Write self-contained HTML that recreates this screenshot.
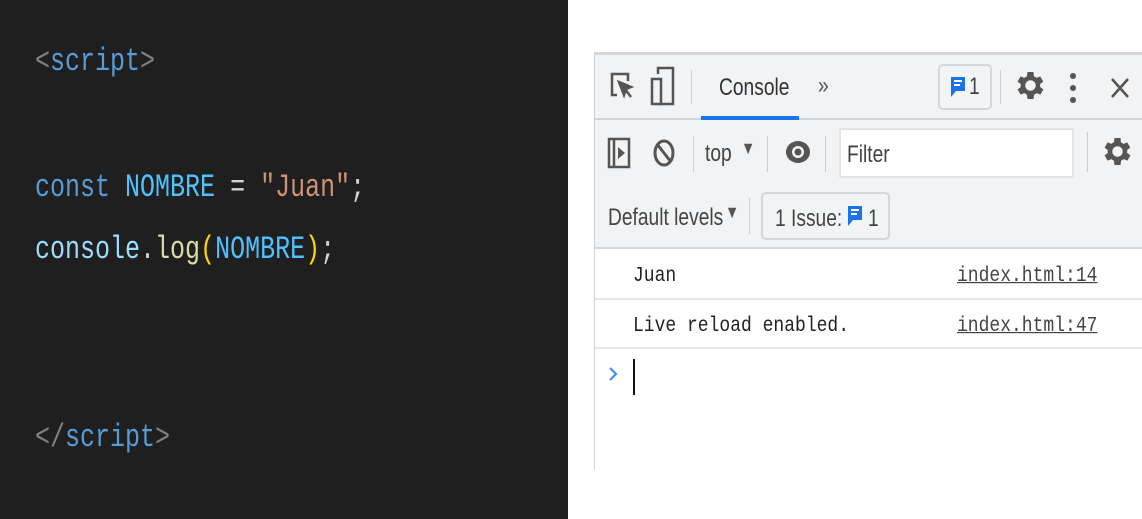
<!DOCTYPE html>
<html><head><meta charset="utf-8"><style>
*{margin:0;padding:0;box-sizing:border-box}
body{width:1142px;height:519px;position:relative;background:#fff;overflow:hidden;font-family:"Liberation Sans",sans-serif}
.ed{position:absolute;left:0;top:0;width:568px;height:519px;background:#1f1f1f}
.cl{position:absolute;left:35px;font-family:"Liberation Mono",monospace;font-size:25px;white-space:pre;transform:scaleY(1.3);transform-origin:left center;line-height:32px;height:32px}
.g{color:#808080}.b{color:#569cd6}.c{color:#4fc1ff}.s{color:#ce9178}.w{color:#d4d4d4}.y{color:#dcdcaa}.p{color:#ffd700}.k{color:#9cdcfe}
.dt{position:absolute;left:594px;top:52px;width:548px;height:418px;border-left:1px solid #cfd1d4}
.bar{position:absolute;left:0;width:548px;background:#f1f3f4}
.sep{position:absolute;width:1px;background:#cdcfd2}
.t{position:absolute;color:#333;font-size:24px;transform:scaleX(0.8);transform-origin:left center;white-space:nowrap}
.mono{position:absolute;font-family:"Liberation Mono",monospace;font-size:18px;color:#222;white-space:pre;transform:scaleY(1.2);transform-origin:left center}
.lnk{text-decoration:underline;color:#444}
.hl{position:absolute;left:0;width:548px;height:2px;background:#e6e7e9}
</style></head><body>
<div class="ed">
<div class="cl" style="top:46px"><span class="g">&lt;</span><span class="b">script</span><span class="g">&gt;</span></div>
<div class="cl" style="top:172px"><span class="b">const</span> <span class="c">NOMBRE</span> <span class="w">=</span> <span class="s">"Juan"</span><span class="w">;</span></div>
<div class="cl" style="top:234px"><span class="k">console</span><span class="w">.</span><span class="y">log</span><span class="p">(</span><span class="c">NOMBRE</span><span class="p">)</span><span class="w">;</span></div>
<div class="cl" style="top:422px"><span class="g">&lt;/</span><span class="b">script</span><span class="g">&gt;</span></div>
</div>
<div class="dt">
<div style="position:absolute;left:0;top:0;width:548px;height:3px;background:#d5d7da"></div>
<div class="bar" style="top:3px;height:63px"></div>
<div style="position:absolute;left:0;top:66px;width:548px;height:2px;background:#d2d4d7"></div>
<div class="bar" style="top:68px;height:128px"></div>
<div style="position:absolute;left:0;top:195px;width:548px;height:2px;background:#d6d8db"></div>
<svg style="position:absolute;left:14px;top:19px" width="26" height="34" viewBox="0 0 26 34" fill="none" stroke="#555" stroke-width="2.5"><path d="M8 24H3V3h16v7"/><path d="M10 11l12 5-5 2-2 6z" fill="#555"/><path d="M16 18l6 8"/></svg>
<svg style="position:absolute;left:55px;top:14px" width="26" height="40" viewBox="0 0 26 40" fill="none" stroke="#555" stroke-width="2.5"><path d="M8 8V2h15v36H9"/><rect x="2" y="13" width="9" height="25"/></svg>
<div class="sep" style="left:96px;top:18px;height:34px"></div>
<div class="t" style="left:124px;top:22px">Console</div>
<div style="position:absolute;left:106px;top:64px;width:98px;height:4px;background:#1a73e8"></div>
<div class="t" style="left:223px;top:20px;color:#555">»</div>
<div style="position:absolute;left:343px;top:12px;width:54px;height:46px;border:2px solid #d5d7da;border-radius:5px;background:#f3f4f5"></div>
<svg style="position:absolute;left:355px;top:24px" width="16" height="22" viewBox="0 0 16 22"><path d="M1 1h14v14H6l-5 6z" fill="#1a73e8"/><path d="M4 5h8M4 9h6" stroke="#fff" stroke-width="2"/></svg>
<div class="t" style="left:374px;top:21px;color:#444">1</div>
<div class="sep" style="left:405px;top:18px;height:34px"></div>
<svg style="position:absolute;left:422px;top:19px" width="30" height="32" viewBox="3 3 20 20"><path fill="#555" d="M19.4 13a7.8 7.8 0 000-2l2.1-1.6-2-3.5-2.5 1a7.6 7.6 0 00-1.7-1L15 3h-4l-.4 2.9a7.6 7.6 0 00-1.7 1l-2.5-1-2 3.5L6.5 11a7.8 7.8 0 000 2l-2.1 1.6 2 3.5 2.5-1a7.6 7.6 0 001.7 1L11 21h4l.4-2.9a7.6 7.6 0 001.7-1l2.5 1 2-3.5zM13 15.5a3.5 3.5 0 110-7 3.5 3.5 0 010 7z" transform="translate(-1 0)"/></svg>
<svg style="position:absolute;left:474px;top:20px" width="8" height="32"><circle cx="4" cy="4" r="3" fill="#555"/><circle cx="4" cy="16" r="3" fill="#555"/><circle cx="4" cy="28" r="3" fill="#555"/></svg>
<svg style="position:absolute;left:515px;top:25px" width="20" height="22" viewBox="0 0 20 22" stroke="#555" stroke-width="2.6"><path d="M2 2l16 18M18 2L2 20"/></svg>
<svg style="position:absolute;left:12px;top:85px" width="24" height="32" viewBox="0 0 24 32" fill="none" stroke="#555" stroke-width="2.5"><rect x="2" y="2" width="20" height="28"/><path d="M7 2v28"/><path d="M11 10l7 6-7 6z" fill="#555" stroke="none"/></svg>
<svg style="position:absolute;left:57px;top:86px" width="24" height="30" viewBox="0 0 24 30" fill="none" stroke="#555" stroke-width="3"><ellipse cx="12" cy="15" rx="9" ry="12"/><path d="M5 6l14 18"/></svg>
<div class="sep" style="left:98px;top:84px;height:36px"></div>
<div class="t" style="left:110px;top:88px;color:#444">top</div>
<div class="t" style="left:146px;top:86px;color:#555;font-size:18px">▼</div>
<div class="sep" style="left:172px;top:84px;height:36px"></div>
<svg style="position:absolute;left:190px;top:88px" width="26" height="24" viewBox="0 0 26 24"><ellipse cx="13" cy="12" rx="12" ry="11" fill="#555"/><circle cx="13" cy="12" r="6" fill="#f1f3f4"/><circle cx="13" cy="12" r="3.5" fill="#555"/></svg>
<div class="sep" style="left:230px;top:84px;height:36px"></div>
<div style="position:absolute;left:244px;top:76px;width:235px;height:50px;background:#fff;border:2px solid #e3e4e6;border-radius:2px"></div>
<div class="t" style="left:252px;top:89px;color:#444">Filter</div>
<div class="sep" style="left:492px;top:80px;height:40px"></div>
<svg style="position:absolute;left:509px;top:84px" width="30" height="34" viewBox="3 3 20 20"><path fill="#555" d="M19.4 13a7.8 7.8 0 000-2l2.1-1.6-2-3.5-2.5 1a7.6 7.6 0 00-1.7-1L15 3h-4l-.4 2.9a7.6 7.6 0 00-1.7 1l-2.5-1-2 3.5L6.5 11a7.8 7.8 0 000 2l-2.1 1.6 2 3.5 2.5-1a7.6 7.6 0 001.7 1L11 21h4l.4-2.9a7.6 7.6 0 001.7-1l2.5 1 2-3.5zM13 15.5a3.5 3.5 0 110-7 3.5 3.5 0 010 7z" transform="translate(-1 0)"/></svg>
<div class="t" style="left:13px;top:152px;color:#444">Default levels</div>
<div class="t" style="left:130px;top:150px;color:#555;font-size:18px">▼</div>
<div class="sep" style="left:154px;top:146px;height:36px"></div>
<div style="position:absolute;left:166px;top:140px;width:129px;height:48px;border:2px solid #d5d7da;border-radius:5px;background:#f3f4f5"></div>
<div class="t" style="left:180px;top:153px;color:#444">1 Issue:</div>
<svg style="position:absolute;left:252px;top:153px" width="16" height="22" viewBox="0 0 16 22"><path d="M1 1h14v14H6l-5 6z" fill="#1a73e8"/><path d="M4 5h8M4 9h6" stroke="#fff" stroke-width="2"/></svg>
<div class="t" style="left:273px;top:153px;color:#444">1</div>
<div class="mono" style="left:38px;top:214px">Juan</div>
<div class="mono lnk" style="left:362px;top:214px">index.html:14</div>
<div class="hl" style="top:246px"></div>
<div class="mono" style="left:38px;top:264px">Live reload enabled.</div>
<div class="mono lnk" style="left:362px;top:264px">index.html:47</div>
<div class="hl" style="top:295px"></div>
<svg style="position:absolute;left:13px;top:314px" width="10" height="16" viewBox="0 0 10 16" fill="none" stroke="#4a8af4" stroke-width="2.2"><path d="M2 2l6 6-6 6"/></svg>
<div style="position:absolute;left:38px;top:307px;width:2px;height:36px;background:#111"></div>
</div>
</body></html>
